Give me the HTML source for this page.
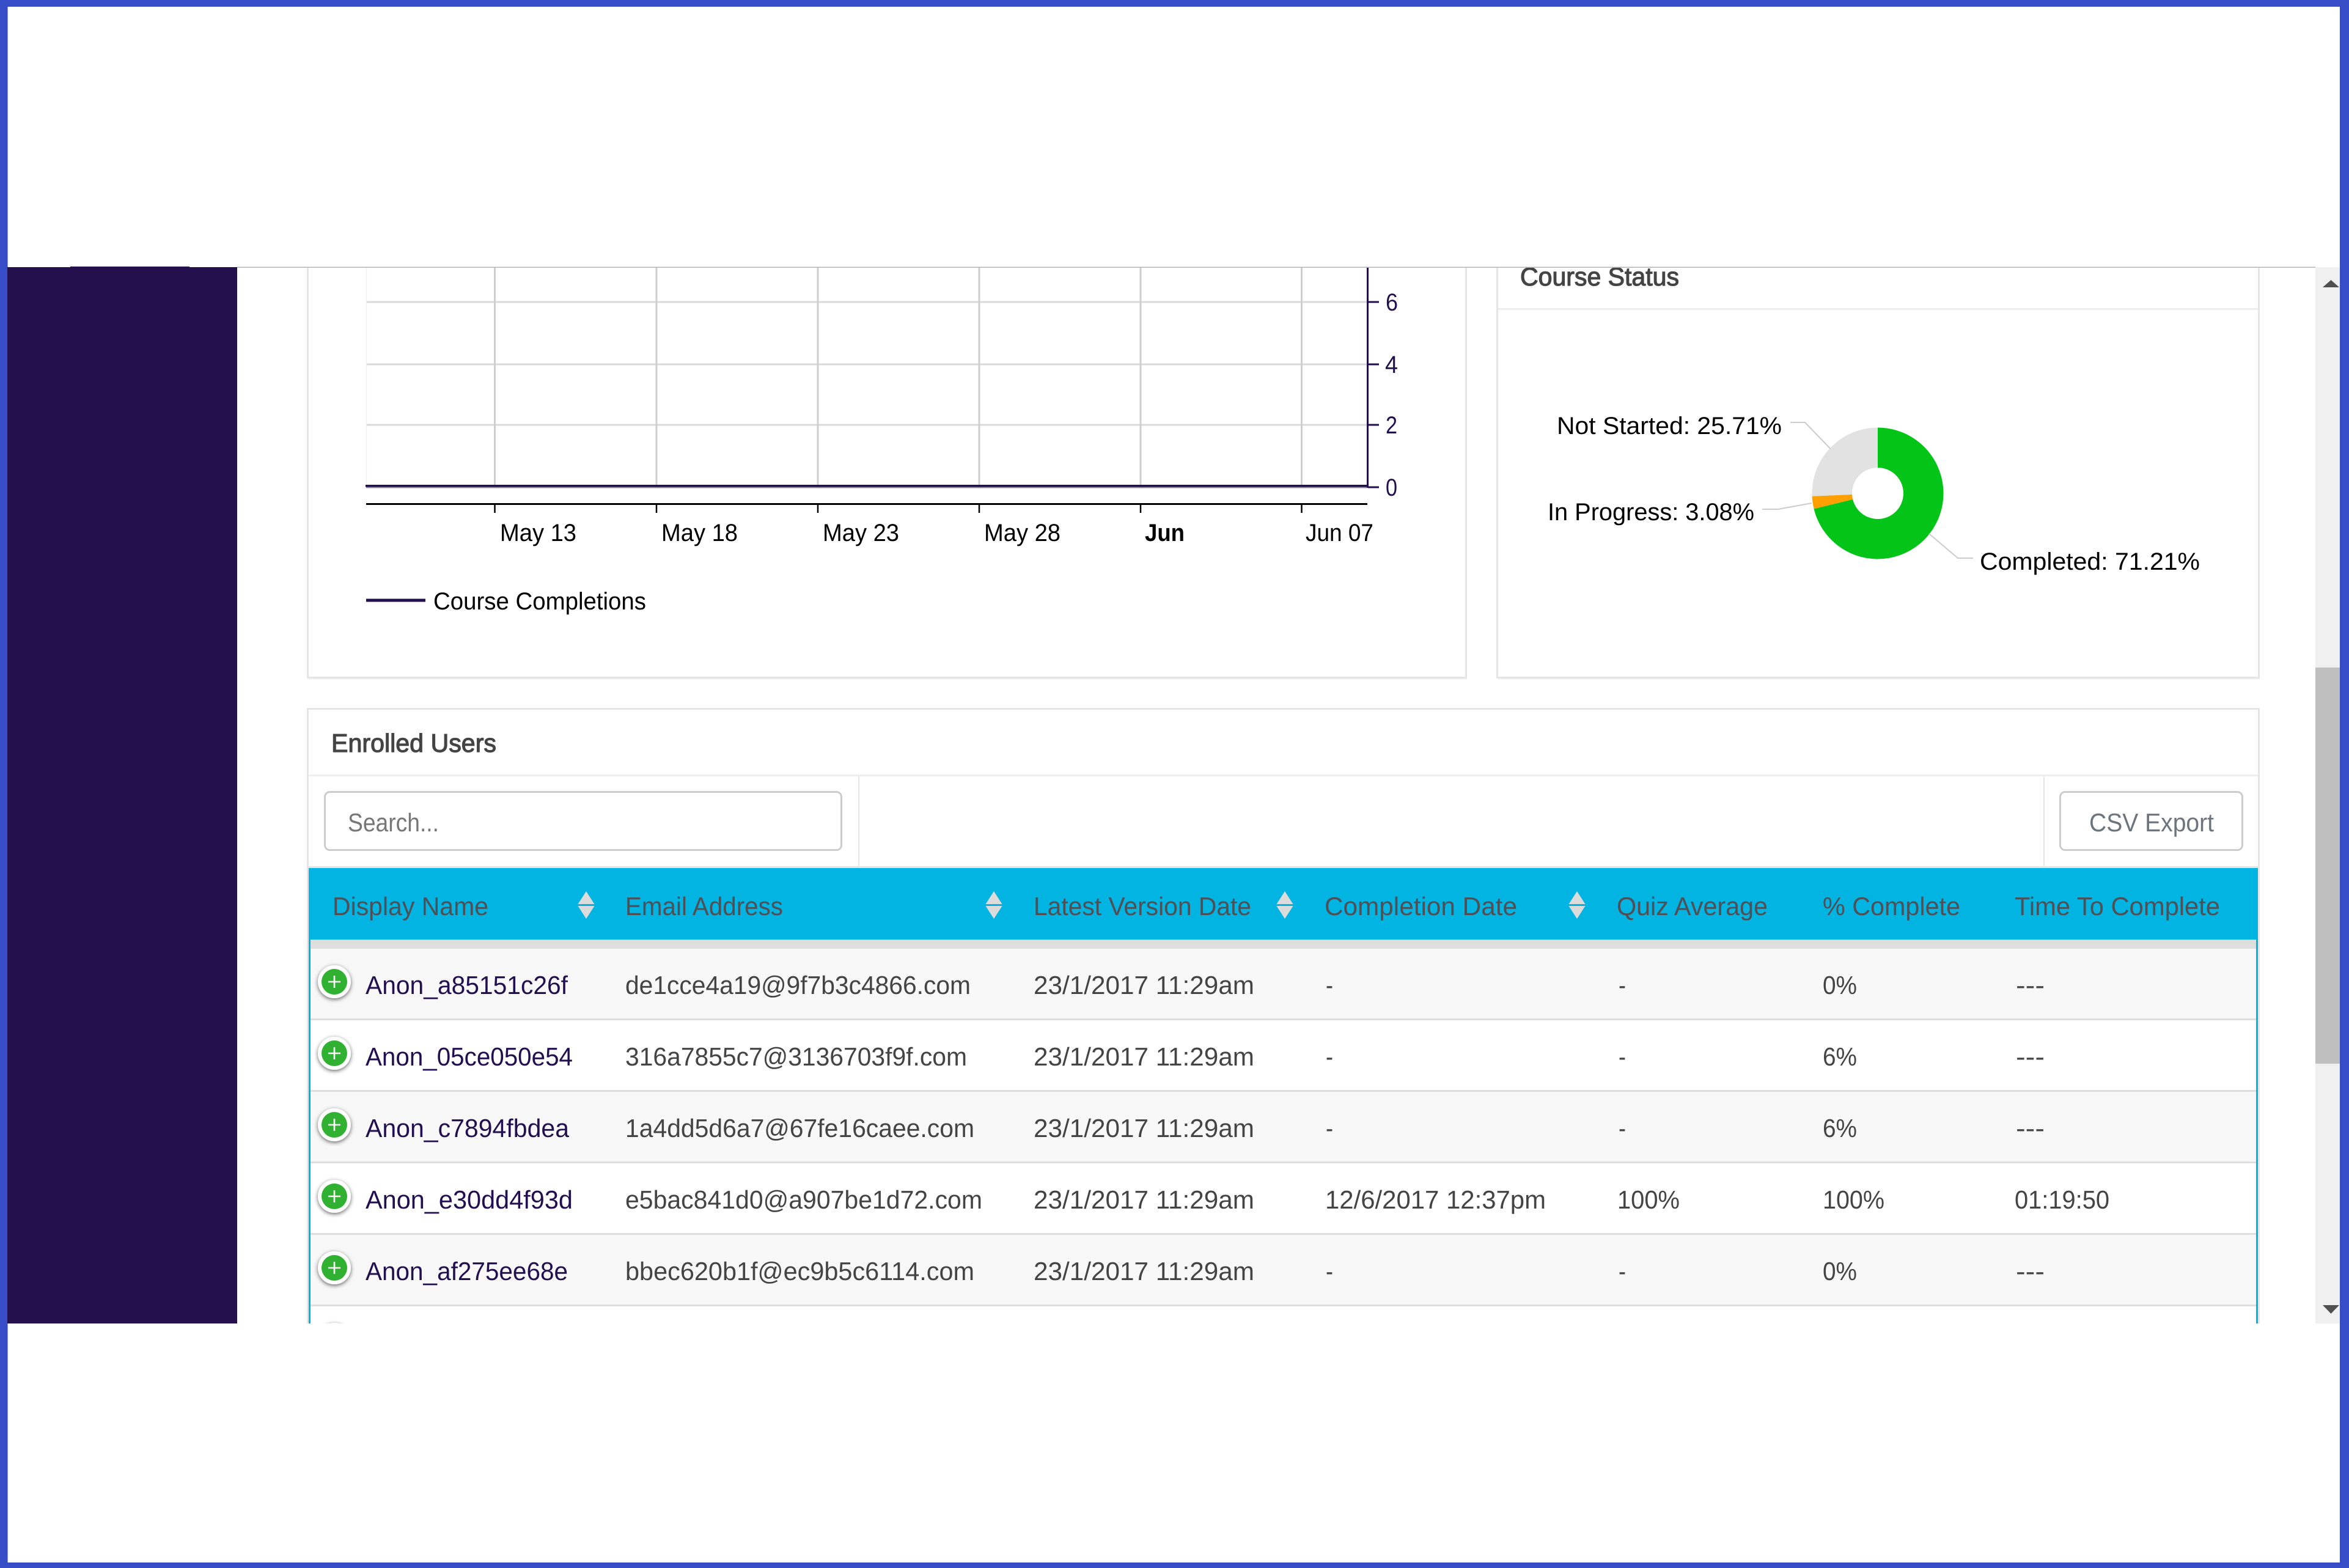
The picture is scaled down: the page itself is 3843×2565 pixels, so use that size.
<!DOCTYPE html>
<html lang="en">
<head>
<meta charset="utf-8">
<title>Course Report</title>
<style>
html,body{margin:0;padding:0;background:#fff;width:3843px;height:2565px;overflow:hidden}
svg{display:block;position:absolute;left:0;top:0}
text{font-family:"Liberation Sans",sans-serif;font-size:42px;text-rendering:geometricPrecision}
.h{fill:#4f4f55}
.c{fill:#444}
.n{fill:#220f50}
.k{fill:#000;font-size:40px}
.a{fill:#220f50;font-size:40px}
.t{fill:#444;stroke:#444;stroke-width:1.2px}
</style>
</head>
<body>
<svg width="3843" height="2565" viewBox="0 0 3843 2565" xmlns="http://www.w3.org/2000/svg">
<defs>
<filter id="s" x="-40%" y="-40%" width="180%" height="190%"><feDropShadow dx="0" dy="2" stdDeviation="3.5" flood-color="#000" flood-opacity=".6"/></filter>
<g id="ic">
<circle r="27" fill="#fff" filter="url(#s)"/>
<circle r="21" fill="#31b131"/>
<path d="M-10 0H10M0-10V10" stroke="#fff" stroke-width="2.6" fill="none"/>
</g>
</defs>

<rect width="3843" height="2565" fill="#fff"/>

<!-- sidebar -->
<rect x="12" y="437" width="376" height="1728" fill="#23104c"/>
<rect x="115" y="436" width="195" height="1" fill="#23104c"/>

<!-- chart card -->
<path d="M503.5 437V1108.5H2398.5V437" fill="none" stroke="#e5e5e5" stroke-width="3"/>
<rect x="505" y="1110" width="1895" height="2" fill="#f6f6f6"/>
<g fill="none">
<path d="M599 494H2237M599 596H2237M599 695H2237" stroke="#d9d9d9" stroke-width="3"/>
<path d="M809.5 437V798M1074 437V798M1338 437V798M1602 437V798M1866 437V798M2129.5 437V798" stroke="#cfcfcf" stroke-width="3"/>
</g>
<path d="M599.5 437V795" stroke="#efefef" stroke-width="1.5" fill="none"/>
<rect x="599" y="796.5" width="1638" height="2" fill="#8f8f8f"/>
<rect x="598" y="793" width="1640" height="3.6" fill="#220f50"/>
<path d="M2237.5 437V798" stroke="#220f50" stroke-width="3" fill="none"/>
<path d="M2238 494H2256M2238 596H2256M2238 695H2256M2238 797H2256" stroke="#220f50" stroke-width="3" fill="none"/>
<text class="a" x="2267" y="508" textLength="20" lengthAdjust="spacingAndGlyphs">6</text>
<text class="a" x="2266" y="610" textLength="21" lengthAdjust="spacingAndGlyphs">4</text>
<text class="a" x="2267" y="709" textLength="19" lengthAdjust="spacingAndGlyphs">2</text>
<text class="a" x="2267" y="811" textLength="19" lengthAdjust="spacingAndGlyphs">0</text>
<rect x="599" y="823" width="1638" height="3" fill="#000"/>
<path d="M809.5 824V839M1074 824V839M1338 824V839M1602 824V839M1866 824V839M2129.5 824V839" stroke="#000" stroke-width="2.5" fill="none"/>
<text class="k" x="818" y="885" textLength="125" lengthAdjust="spacingAndGlyphs">May 13</text>
<text class="k" x="1082" y="885" textLength="125" lengthAdjust="spacingAndGlyphs">May 18</text>
<text class="k" x="1346" y="885" textLength="125" lengthAdjust="spacingAndGlyphs">May 23</text>
<text class="k" x="1610" y="885" textLength="125" lengthAdjust="spacingAndGlyphs">May 28</text>
<text class="k" x="1873" y="885" textLength="65" lengthAdjust="spacingAndGlyphs" font-weight="bold">Jun</text>
<text class="k" x="2136" y="885" textLength="111" lengthAdjust="spacingAndGlyphs">Jun 07</text>
<rect x="599" y="979.5" width="97" height="5" fill="#220f50"/>
<text class="k" x="709" y="997" textLength="348" lengthAdjust="spacingAndGlyphs">Course Completions</text>

<!-- status card -->
<path d="M2449.5 437V1108.5H3695.5V437" fill="none" stroke="#e5e5e5" stroke-width="3"/>
<rect x="2451" y="1110" width="1246" height="2" fill="#f6f6f6"/>
<rect x="2451" y="504" width="1243" height="3" fill="#eee"/>
<text class="t" x="2487" y="467" textLength="260" lengthAdjust="spacingAndGlyphs">Course Status</text>
<path d="M3072 699.5A107.5 107.5 0 1 1 2967.53 832.35L3031.18 816.9A42 42 0 1 0 3072 765Z" fill="#04c417"/>
<path d="M2967.53 832.35A107.5 107.5 0 0 1 2964.61 811.78L3030.04 808.87A42 42 0 0 0 3031.18 816.9Z" fill="#ff9f00"/>
<path d="M2964.61 811.78A107.5 107.5 0 0 1 3072 699.5V765A42 42 0 0 0 3030.04 808.87Z" fill="#e2e2e2"/>
<g fill="none" stroke="#ccc" stroke-width="2">
<path d="M2929 691H2953L2994.5 734"/>
<path d="M2883 833H2909L2964 823"/>
<path d="M3156 873L3203 913H3228"/>
</g>
<text class="k" x="2547" y="710" textLength="368" lengthAdjust="spacingAndGlyphs">Not Started: 25.71%</text>
<text class="k" x="2532" y="851" textLength="338" lengthAdjust="spacingAndGlyphs">In Progress: 3.08%</text>
<text class="k" x="3239" y="932" textLength="360" lengthAdjust="spacingAndGlyphs">Completed: 71.21%</text>

<!-- enrolled card -->
<path d="M503.5 2165V1159.5H3695.5V2165" fill="none" stroke="#e5e5e5" stroke-width="3"/>
<text class="t" x="542" y="1230" textLength="270" lengthAdjust="spacingAndGlyphs">Enrolled Users</text>
<rect x="505" y="1267" width="3189" height="3" fill="#eee"/>
<rect x="505" y="1417" width="3189" height="3" fill="#e5e5e5"/>
<rect x="1404" y="1270" width="2" height="147" fill="#e5e5e5"/>
<rect x="3343" y="1270" width="2" height="147" fill="#e5e5e5"/>
<rect x="531.5" y="1295.5" width="845" height="95" rx="8" fill="#fff" stroke="#ccc" stroke-width="3"/>
<text x="569" y="1360" fill="#777" textLength="149" lengthAdjust="spacingAndGlyphs">Search...</text>
<rect x="3370.5" y="1295.5" width="298" height="95" rx="8" fill="#fff" stroke="#ccc" stroke-width="3"/>
<text x="3418" y="1360" fill="#6c757d" textLength="204" lengthAdjust="spacingAndGlyphs">CSV Export</text>

<!-- table header -->
<rect x="505" y="1420" width="3189" height="117" fill="#01b4e2"/>
<g class="h">
<text class="h" x="544" y="1497" textLength="255" lengthAdjust="spacingAndGlyphs">Display Name</text>
<text class="h" x="1023" y="1497" textLength="258" lengthAdjust="spacingAndGlyphs">Email Address</text>
<text class="h" x="1691" y="1497" textLength="356" lengthAdjust="spacingAndGlyphs">Latest Version Date</text>
<text class="h" x="2167" y="1497" textLength="315" lengthAdjust="spacingAndGlyphs">Completion Date</text>
<text class="h" x="2645" y="1497" textLength="247" lengthAdjust="spacingAndGlyphs">Quiz Average</text>
<text class="h" x="2982" y="1497" textLength="225" lengthAdjust="spacingAndGlyphs">% Complete</text>
<text class="h" x="3296" y="1497" textLength="336" lengthAdjust="spacingAndGlyphs">Time To Complete</text>
</g>
<g fill="#dcdcdc">
<path d="M959 1458L972.5 1479H945.5ZM945.5 1482H972.5L959 1503Z"/>
<path d="M1626 1458L1639.5 1479H1612.5ZM1612.5 1482H1639.5L1626 1503Z"/>
<path d="M2102 1458L2115.5 1479H2088.5ZM2088.5 1482H2115.5L2102 1503Z"/>
<path d="M2580 1458L2593.5 1479H2566.5ZM2566.5 1482H2593.5L2580 1503Z"/>
</g>

<!-- table body -->
<rect x="508" y="1537" width="3183" height="15" fill="#dedede"/>
<rect x="508" y="1552" width="3183" height="114" fill="#f8f8f8"/>
<rect x="508" y="1666" width="3183" height="3" fill="#dedede"/>
<rect x="508" y="1669" width="3183" height="114" fill="#fff"/>
<rect x="508" y="1783" width="3183" height="3" fill="#dedede"/>
<rect x="508" y="1786" width="3183" height="114" fill="#f8f8f8"/>
<rect x="508" y="1900" width="3183" height="3" fill="#dedede"/>
<rect x="508" y="1903" width="3183" height="114" fill="#fff"/>
<rect x="508" y="2017" width="3183" height="3" fill="#dedede"/>
<rect x="508" y="2020" width="3183" height="114" fill="#f8f8f8"/>
<rect x="508" y="2134" width="3183" height="3" fill="#dedede"/>
<rect x="505" y="1537" width="3" height="628" fill="#01b4e2"/>
<rect x="3691" y="1537" width="3" height="628" fill="#01b4e2"/>

<use href="#ic" x="547" y="1606"/>
<use href="#ic" x="547" y="1723"/>
<use href="#ic" x="547" y="1840"/>
<use href="#ic" x="547" y="1957"/>
<use href="#ic" x="547" y="2074"/>
<use href="#ic" x="547" y="2191"/>

<text class="n" x="598" y="1626" textLength="331" lengthAdjust="spacingAndGlyphs">Anon_a85151c26f</text>
<text class="c" x="1023" y="1626" textLength="565" lengthAdjust="spacingAndGlyphs">de1cce4a19@9f7b3c4866.com</text>
<text class="c" x="1691" y="1626" textLength="361" lengthAdjust="spacingAndGlyphs">23/1/2017 11:29am</text>
<text class="c" x="2169" y="1626" textLength="12" lengthAdjust="spacingAndGlyphs">-</text>
<text class="c" x="2648" y="1626" textLength="12" lengthAdjust="spacingAndGlyphs">-</text>
<text class="c" x="2982" y="1626" textLength="56" lengthAdjust="spacingAndGlyphs">0%</text>
<text class="c" x="3298" y="1626" textLength="47" lengthAdjust="spacingAndGlyphs">---</text>

<text class="n" x="598" y="1743" textLength="339" lengthAdjust="spacingAndGlyphs">Anon_05ce050e54</text>
<text class="c" x="1023" y="1743" textLength="559" lengthAdjust="spacingAndGlyphs">316a7855c7@3136703f9f.com</text>
<text class="c" x="1691" y="1743" textLength="361" lengthAdjust="spacingAndGlyphs">23/1/2017 11:29am</text>
<text class="c" x="2169" y="1743" textLength="12" lengthAdjust="spacingAndGlyphs">-</text>
<text class="c" x="2648" y="1743" textLength="12" lengthAdjust="spacingAndGlyphs">-</text>
<text class="c" x="2982" y="1743" textLength="56" lengthAdjust="spacingAndGlyphs">6%</text>
<text class="c" x="3298" y="1743" textLength="47" lengthAdjust="spacingAndGlyphs">---</text>

<text class="n" x="598" y="1860" textLength="333" lengthAdjust="spacingAndGlyphs">Anon_c7894fbdea</text>
<text class="c" x="1023" y="1860" textLength="571" lengthAdjust="spacingAndGlyphs">1a4dd5d6a7@67fe16caee.com</text>
<text class="c" x="1691" y="1860" textLength="361" lengthAdjust="spacingAndGlyphs">23/1/2017 11:29am</text>
<text class="c" x="2169" y="1860" textLength="12" lengthAdjust="spacingAndGlyphs">-</text>
<text class="c" x="2648" y="1860" textLength="12" lengthAdjust="spacingAndGlyphs">-</text>
<text class="c" x="2982" y="1860" textLength="56" lengthAdjust="spacingAndGlyphs">6%</text>
<text class="c" x="3298" y="1860" textLength="47" lengthAdjust="spacingAndGlyphs">---</text>

<text class="n" x="598" y="1977" textLength="339" lengthAdjust="spacingAndGlyphs">Anon_e30dd4f93d</text>
<text class="c" x="1023" y="1977" textLength="584" lengthAdjust="spacingAndGlyphs">e5bac841d0@a907be1d72.com</text>
<text class="c" x="1691" y="1977" textLength="361" lengthAdjust="spacingAndGlyphs">23/1/2017 11:29am</text>
<text class="c" x="2168" y="1977" textLength="361" lengthAdjust="spacingAndGlyphs">12/6/2017 12:37pm</text>
<text class="c" x="2646" y="1977" textLength="102" lengthAdjust="spacingAndGlyphs">100%</text>
<text class="c" x="2982" y="1977" textLength="101" lengthAdjust="spacingAndGlyphs">100%</text>
<text class="c" x="3296" y="1977" textLength="155" lengthAdjust="spacingAndGlyphs">01:19:50</text>

<text class="n" x="598" y="2094" textLength="331" lengthAdjust="spacingAndGlyphs">Anon_af275ee68e</text>
<text class="c" x="1023" y="2094" textLength="571" lengthAdjust="spacingAndGlyphs">bbec620b1f@ec9b5c6114.com</text>
<text class="c" x="1691" y="2094" textLength="361" lengthAdjust="spacingAndGlyphs">23/1/2017 11:29am</text>
<text class="c" x="2169" y="2094" textLength="12" lengthAdjust="spacingAndGlyphs">-</text>
<text class="c" x="2648" y="2094" textLength="12" lengthAdjust="spacingAndGlyphs">-</text>
<text class="c" x="2982" y="2094" textLength="56" lengthAdjust="spacingAndGlyphs">0%</text>
<text class="c" x="3298" y="2094" textLength="47" lengthAdjust="spacingAndGlyphs">---</text>

<!-- clip bottom -->
<rect x="12" y="2165" width="3816" height="391" fill="#fff"/>
<!-- clip top -->
<rect x="12" y="11" width="3816" height="425" fill="#fff"/>
<rect x="388" y="436.5" width="3400" height="1.5" fill="#b5b5b5"/>
<rect x="115" y="436" width="195" height="2" fill="#23104c"/>

<!-- scrollbar -->
<rect x="3788" y="437" width="40" height="1728" fill="#f0f0f0"/>
<rect x="3788" y="1092" width="40" height="648" fill="#bfbfbf"/>
<path d="M3813.5 458L3827 470H3800Z" fill="#505050"/>
<path d="M3800 2135H3827L3813.5 2149Z" fill="#505050"/>

<!-- frame -->
<rect x="0" y="0" width="3843" height="11" fill="#374dc8"/>
<rect x="0" y="2556" width="3843" height="9" fill="#374dc8"/>
<rect x="0" y="0" width="12" height="2565" fill="#374dc8"/>
<rect x="3828" y="0" width="15" height="2565" fill="#374dc8"/>
<rect x="12" y="11" width="1" height="426" fill="#8796e0"/>
<rect x="12" y="2165" width="1" height="391" fill="#8796e0"/>
</svg>
</body>
</html>
